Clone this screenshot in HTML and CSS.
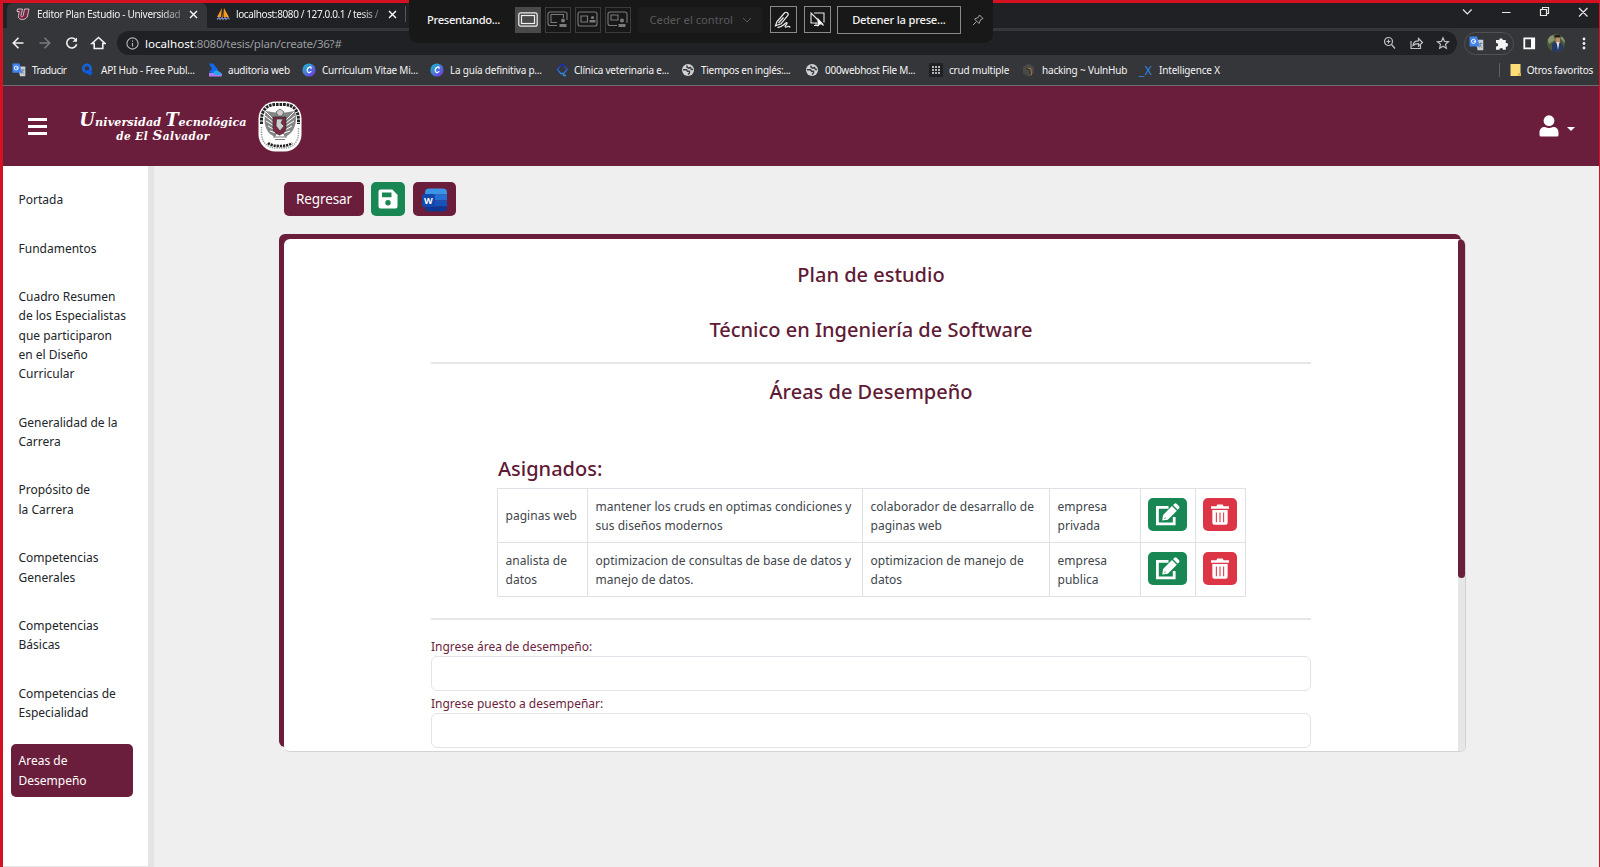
FILE: index.html
```html
<!DOCTYPE html>
<html lang="es">
<head>
<meta charset="utf-8">
<title>Editor Plan Estudio - Universidad Tecnológica</title>
<link rel="stylesheet" href="styles.css">
</head>
<body>
<svg class="defs" width="0" height="0">
  <defs>
    <linearGradient id="canva" x1="0" y1="0" x2="1" y2="1"><stop offset="0" stop-color="#14c4cc"/><stop offset="1" stop-color="#7a2be8"/></linearGradient>
    <linearGradient id="blue" x1="0" y1="0" x2="0" y2="1"><stop offset="0" stop-color="#1b27c4"/><stop offset="1" stop-color="#2f9be0"/></linearGradient>
    <symbol id="translate" viewBox="0 0 14 14"><path d="M6 3.5h7.3v9.8H8z" fill="#c9cdd4"/><path d="M.5.5h7l2.6 9.3H.5z" fill="#4284f0"/><circle cx="4.2" cy="5" r="1.9" fill="none" stroke="#fff" stroke-width=".9"/><path d="M4.3 5h2" stroke="#fff" stroke-width=".9"/><path d="M9.5 7h3M11 6v1c0 2-1 3-2 4m.8-3c.5 1.300 1.300 2 2.400 2.800" stroke="#6d7680" stroke-width=".7" fill="none"/></symbol>
    <symbol id="globe" viewBox="0 0 14 14"><circle cx="7" cy="7" r="6" fill="#d0d2d6"/><path d="M2 6.800h3.500l1 1.400h2v1.800l-1.500 1.500M6 2.500v1.700l2 1 1.500-.7 1 2H12" fill="none" stroke="#3a3b3f" stroke-width="1.400"/></symbol>
    <symbol id="canvaicon" viewBox="0 0 14 14"><circle cx="7" cy="7" r="6.600" fill="url(#canva)"/><path d="M9.200 5.200c0-2-3.200-1.600-3.900 1.300-.7 3 1.800 3.900 3.600 2.100" fill="none" stroke="#fff" stroke-width="1.300" stroke-linecap="round"/></symbol>
    <symbol id="edit" viewBox="0 0 25 23"><path d="M13.500 4.300H2.400v16.600h16.800V14" fill="none" stroke="#fff" stroke-width="2.800"/><path d="M7.200 17.500l.9-5.600L17 3l4.800 4.800-9 9z" fill="#fff"/><path d="M18 2.100L19.300.9a1.800 1.800 0 0 1 2.500 0l2.100 2.100a1.800 1.800 0 0 1 0 2.500l-1.200 1.300z" fill="#fff"/><path d="M9.500 15.300l1.200-.3" fill="none" stroke="#198754" stroke-width="1"/></symbol>
    <symbol id="trash" viewBox="0 0 20 24"><path d="M.6 3.300h5.600L7.200 1.500h5.600l1 1.800h5.600v2.800H.6z" fill="#fff"/><path d="M2 7.300h16v13.400a2 2 0 0 1-2 2H4a2 2 0 0 1-2-2z" fill="#fff"/><path d="M6.200 10v10M10 10v10M13.800 10v10" stroke="#dc3545" stroke-width="1.100"/></symbol>
  </defs>
</svg>
<div class="screen">
  <div class="tabs">
    <div class="tab active">
      <svg class="fav" width="14" height="14" viewBox="0 0 14 14"><path d="M1.500 2h5L5 8.500c-.3 1.500 1.800 1.500 2.200 0L8.500 2h4.500l-1.500 7c-1.200 5-10.500 4.500-9-.5L3.300 4.500H1z" fill="#7c2442" stroke="#e8dfe3" stroke-width=".8"/></svg>
      <span class="tabname">Editor Plan Estudio - Universidad</span>
      <svg class="x" width="9" height="9" viewBox="0 0 9 9"><path d="M1 1l7 7M8 1L1 8" stroke="#fff" stroke-width="1.400"/></svg>
    </div>
    <div class="tab">
      <svg class="fav" width="15" height="14" viewBox="0 0 15 14"><path d="M6 1L1 10h4zM8 1v9h5z" fill="#f29a1f"/><path d="M8 1l-2 9h1.500z" fill="#c9702a"/><path d="M1 12.500l2-2 1 2 2-2 1 2 2-2 1 2 2-2 1.500 2" fill="none" stroke="#8188b5" stroke-width="1.200"/></svg>
      <span class="tabname two">localhost:8080 / 127.0.0.1 / tesis /</span>
      <svg class="x" width="9" height="9" viewBox="0 0 9 9"><path d="M1 1l7 7M8 1L1 8" stroke="#fff" stroke-width="1.400"/></svg>
    </div>
    <span class="tabsep"></span>
    <svg class="winbtns" width="136" height="20" viewBox="0 0 136 20" fill="none" stroke="#e8e8e8" stroke-width="1.200"><path d="M3 6.500l4.300 4.300 4.300-4.300M42 9.500h8.500"/><path d="M80.500 6.500h6v6h-6zM82.500 6.300V4.500h6v6h-1.800M119 5l8.500 8.500m0-8.500L119 13.500"/></svg>
  </div>

  <div class="toolbar">
    <svg class="nav" width="94" height="24" viewBox="0 0 94 24" fill="none" stroke="#f1f1f1" stroke-width="1.600"><path d="M11.500 12H1.500M6.500 6.800L1.300 12l5.200 5.200"/><path d="M27.500 12h10M32.500 6.800l5.200 5.200-5.200 5.200" stroke="#77797d"/><path d="M64 9.300a5 5 0 1 0 .6 3.900"/><path d="M65 6.500v4.300h-4.500z" fill="#f1f1f1" stroke="none"/><path d="M82.200 17.500v-5h-2.200l6.500-6 6.500 6h-2.200v5z"/></svg>
    <div class="omnibox">
      <svg width="13" height="13" viewBox="0 0 13 13" fill="none" stroke="#b5b7ba" stroke-width="1.100"><circle cx="6.500" cy="6.500" r="5.600"/><path d="M6.500 6v3.500M6.500 3.500v1.200"/></svg>
      <span class="url"><b>localhost</b>:8080/tesis/plan/create/36?#</span>
      <svg class="omni-icons" width="68" height="14" viewBox="0 0 68 14" fill="none" stroke="#bfc1c4" stroke-width="1.200"><circle cx="5.500" cy="5.500" r="4"/><path d="M8.500 8.500l3.500 4M3.500 5.500h4M5.500 3.500v4M28 5v7.500h9.500V9M30 9.500c.3-3 2.500-4.700 5.500-4.700V2.500l4 4-4 3.600V7.700c-2.300 0-4 .3-5.500 1.800z"/><path d="M60 1.800l1.500 3.600 4 .3-3 2.600.9 3.900-3.400-2-3.400 2 .9-3.900-3-2.600 4-.3z"/></svg>
    </div>
    <div class="exts">
      <svg width="15" height="15"><use href="#translate"/></svg>
      <svg width="13" height="13" viewBox="0 0 13 13"><path d="M1 3h3.200a1.800 1.800 0 1 1 3.600 0h3v3.200a1.800 1.800 0 1 1 0 3.500v3H8a1.800 1.800 0 0 0-3.600 0H1V9.500a1.700 1.700 0 1 0 0-3.300z" fill="#f4f4f4"/></svg>
    </div>
    <svg width="13" height="13" viewBox="0 0 13 13"><path d="M1.300 1.300h9.900v10H1.300z" fill="none" stroke="#fff" stroke-width="1.800"/><path d="M8 1h4v11H8z" fill="#fff"/></svg>
    <svg class="avatar" width="18" height="18" viewBox="0 0 18 18"><defs><clipPath id="av"><circle cx="9" cy="9" r="9"/></clipPath></defs><g clip-path="url(#av)"><path d="M0 0h18v18H0z" fill="#4c5a3c"/><path d="M0 3l6-2 2 5-6 4zM13 4l5-2v7z" fill="#87946b"/><path d="M5 18V10l3-2 4-1 4 4v7z" fill="#253a66"/><path d="M8.500 2h4.500v6l-2 3-2.500-3z" fill="#bd8a70"/><path d="M8 1h5v2.500H8z" fill="#221b19"/><path d="M9.500 8l1.500 8 1.500-8z" fill="#dcdde6"/></g></svg>
    <svg class="dots" width="4" height="13" viewBox="0 0 4 13" fill="#f1f1f1"><circle cx="2" cy="2" r="1.400"/><circle cx="2" cy="6.500" r="1.400"/><circle cx="2" cy="11" r="1.400"/></svg>
  </div>

  <div class="bookmarks">
    <div class="bm b1"><svg width="14" height="14"><use href="#translate"/></svg><span>Traducir</span></div>
    <div class="bm b2"><svg width="14" height="14" viewBox="0 0 14 14"><circle cx="6" cy="5.500" r="3.700" fill="none" stroke="#1463d8" stroke-width="2.700"/><path d="M3 8l5-1 3.500 2-2 4z" fill="#0d5be0"/></svg><span>API Hub - Free Publ...</span></div>
    <div class="bm b3"><svg width="14" height="14" viewBox="0 0 14 14"><path d="M1 .5h4l5 6-6 4L1 9l3-3z" fill="#1268ee"/><path d="M1 10h10a2 2 0 0 1 2 3.500H1z" fill="#b07af0"/><path d="M5 9l4-2 4 3v2H7z" fill="#28a4ee"/></svg><span>auditoria web</span></div>
    <div class="bm b4"><svg width="14" height="14"><use href="#canvaicon"/></svg><span>Currículum Vitae Mi...</span></div>
    <div class="bm b5"><svg width="14" height="14"><use href="#canvaicon"/></svg><span>La guía definitiva p...</span></div>
    <div class="bm b6"><svg width="14" height="14" viewBox="0 0 14 14"><path d="M5.500 1.300L1.500 6.500l3.300 4h2.800l3.500-4-4-5.200zM6.500 10.500l1.500 2h2" fill="none" stroke="url(#blue)" stroke-width="1.300"/></svg><span>Clínica veterinaria e...</span></div>
    <div class="bm b7"><svg width="14" height="14"><use href="#globe"/></svg><span>Tiempos en inglés:...</span></div>
    <div class="bm b8"><svg width="14" height="14"><use href="#globe"/></svg><span>000webhost File M...</span></div>
    <div class="bm b9"><svg width="14" height="14" viewBox="0 0 14 14"><path d="M0 0h14v14H0z" fill="#202124"/><path d="M3 4h2m1 0h2m1 0h2M3 7h2m1 0h2m1 0h2M3 10h2m1 0h2m1 0h2" stroke="#e6e6e6" stroke-width="1.400"/></svg><span>crud multiple</span></div>
    <div class="bm b10"><svg width="14" height="14" viewBox="0 0 14 14"><path d="M6.500.5l5.500 3.500v6l-5.500 3.500L1 10V4z" fill="#4b4a4a"/><path d="M4.500 5l4-.3 1.500 2.800v4.300L8.500 13V8z" fill="#98703f"/><path d="M4 5.500l4 1.500v4" fill="none" stroke="#242427"/></svg><span>hacking ~ VulnHub</span></div>
    <div class="bm b11"><span class="ix">_X</span><span>Intelligence X</span></div>
    <div class="other"><svg width="11" height="12" viewBox="0 0 11 12"><path d="M.5 0h10v12h-10z" fill="#fbdc78"/><path d="M8 9h3v3H8z" fill="#e0b64c"/></svg><span>Otros favoritos</span></div>
  </div>

  <div class="present">
    <span class="ptext">Presentando...</span>
    <div class="modes">
      <div class="mode on"><svg width="20" height="15" viewBox="0 0 20 15" fill="none" stroke="#f0f0f0" stroke-width="1.200"><rect x=".8" y=".8" width="18.400" height="13.400" rx="2"/><rect x="3.500" y="3.500" width="13" height="8"/></svg></div>
      <div class="mode"><svg width="22" height="17" viewBox="0 0 22 17" fill="none" stroke="#7b7b7b" stroke-width="1.100"><path d="M10 14.500H3a2 2 0 0 1-2-2V3a2 2 0 0 1 2-2h15a2 2 0 0 1 2 2v6M10 11.500H4v-8h12.500V7"/><circle cx="16" cy="9.500" r="2" fill="#7b7b7b" stroke="none"/><path d="M12.500 16v-3h7v3z" fill="#7b7b7b" stroke="none"/></svg></div>
      <div class="mode"><svg width="22" height="17" viewBox="0 0 22 17" fill="none" stroke="#7b7b7b" stroke-width="1.100"><rect x="1" y="1" width="19" height="14" rx="2"/><path d="M4 5h6.500v6H4z"/><circle cx="15.500" cy="6.500" r="1.600" fill="#7b7b7b" stroke="none"/><path d="M12.500 11.500V9h6v2.500z" fill="#7b7b7b" stroke="none"/></svg></div>
      <div class="mode"><svg width="22" height="17" viewBox="0 0 22 17" fill="none" stroke="#7b7b7b" stroke-width="1.100"><path d="M10 14.500H3a2 2 0 0 1-2-2V3a2 2 0 0 1 2-2h15a2 2 0 0 1 2 2v9"/><path d="M4 4h7v5H4z"/><circle cx="15" cy="9.500" r="2" fill="#7b7b7b" stroke="none"/><path d="M11.500 16v-3h7v3z" fill="#7b7b7b" stroke="none"/></svg></div>
    </div>
    <div class="ceder"><span>Ceder el control</span><svg width="10" height="6" viewBox="0 0 10 6"><path d="M1 1l4 4 4-4" fill="none" stroke="#5a5a5a"/></svg></div>
    <div class="sq"><svg width="18" height="18" viewBox="0 0 18 18" fill="none" stroke="#f0f0f0" stroke-width="1.200"><path d="M1.500 14.800L3 10.500 10.500 2c1.700-1.800 4.700.3 3.300 2.400L7 12.800zM4.500 12l5-5.500M3.500 16.300c3.500.8 6.500-3.300 8.700-4.500 1.200-.5 1.200 1-.2 2.200-1.600 1.600-.8 2.500 1 1.800 1.700-.7 2.500-.5 3.200.7"/></svg></div>
    <div class="sq"><svg width="17" height="17" viewBox="0 0 17 17" fill="none" stroke="#e8e8e8" stroke-width="1.100"><path d="M5 2h10v9.500M2 3v9h6M5 14.500h5M7 12v2.500M1.500 1.500l13 13"/><path d="M9 8v6.500l1.700-1.500 2.800-.1z" fill="#fff"/></svg></div>
    <div class="stop">Detener la prese...</div>
    <svg class="pin" width="12" height="12" viewBox="0 0 12 12" fill="none" stroke="#a5a5a5"><path d="M7.500 1l3.500 3.500-2.500 1.200L7 9.500 2.500 5l3.800-1.500zM4.500 7.500L1 11"/></svg>
  </div>

  <header class="header">
    <svg class="menu" width="19" height="17" viewBox="0 0 19 17"><path d="M0 1.500h19M0 8.500h19M0 15.500h19" stroke="#fff" stroke-width="2.900"/></svg>
    <div class="brand"><div class="l1"><i>U</i>niversidad <i>T</i>ecnológica</div><div class="l2">de El <i>S</i>alvador</div></div>
    <svg class="seal" width="44" height="51" viewBox="0 0 44 51">
      <rect x=".5" y=".5" width="43" height="50" rx="17" fill="#fff"/>
      <path d="M3.500 23V19C3.500 9 9 3.500 18 3.500h8c9 0 14.500 5.500 14.500 15.500v4" fill="none" stroke="#222" stroke-width="3" stroke-dasharray="2.600 .9"/>
      <path d="M3.500 26v6c0 9 5.500 15 14.500 15h8c9 0 14.500-6 14.500-15v-6" fill="none" stroke="#999" stroke-width="1.500" stroke-dasharray="1.300 1"/>
      <path d="M10 42c4 4 20 4 24 0" fill="none" stroke="#222" stroke-width="2.600" stroke-dasharray="2.200 .9"/>
      <path d="M20 12L8 10c-3 9-1 18 4 23l5 3 4-7h2l4 7c9-4 13-14 10-26l-13 2z" fill="#858585"/>
      <path d="M8 11l8 8M7 15l9 7M8 20l8 5M10 25l7 4M12 30l6 2M36 11l-8 8M37 15l-9 7M36 20l-8 5M34 25l-7 4M32 30l-6 2" stroke="#fff" stroke-width="1"/>
      <path d="M15 16h13v11c0 5-6.500 7-6.500 7S15 32 15 27z" fill="#7d2944" stroke="#333" stroke-width=".8"/>
      <path d="M18.500 18H25l-2 4 3 3-4 5-4-5z" fill="#ccc" stroke="#333" stroke-width=".7"/>
      <path d="M18 11l4-3 4 3-2 4h-4zM15 36h14M17 38.500h10" stroke="#555" fill="#ccc" stroke-width=".8"/>
    </svg>
    <svg class="user" width="20" height="22" viewBox="0 0 20 22" fill="#fff"><circle cx="10" cy="5.700" r="5.400"/><path d="M.5 20v-2.500c0-3.500 2.200-5.500 5.500-5.500 2.500 1.200 5.500 1.200 8 0 3.300 0 5.500 2 5.500 5.500V20a1.500 1.500 0 0 1-1.500 1.500H2A1.500 1.500 0 0 1 .5 20z"/></svg>
    <svg class="caret" width="8" height="4" viewBox="0 0 8 4"><path d="M0 0h8L4 4z" fill="#fff"/></svg>
  </header>

  <div class="body">
    <nav class="side">
      <a>Portada</a>
      <a>Fundamentos</a>
      <a>Cuadro Resumen<br>de los Especialistas<br>que participaron<br>en el Diseño<br>Curricular</a>
      <a>Generalidad de la<br>Carrera</a>
      <a>Propósito de<br>la Carrera</a>
      <a>Competencias<br>Generales</a>
      <a>Competencias<br>Básicas</a>
      <a>Competencias de<br>Especialidad</a>
      <a class="current">Areas de<br>Desempeño</a>
    </nav>
    <main class="main">
      <div class="actions">
        <div class="btn back">Regresar</div>
        <div class="btn save"><svg width="20" height="20" viewBox="0 0 20 20"><path fill-rule="evenodd" d="M2.500.5h11.800l5.200 5.200v11.800a2 2 0 0 1-2 2h-15a2 2 0 0 1-2-2v-15a2 2 0 0 1 2-2zM4 3.500v4.800h9.500V3.500z" fill="#fff"/><circle cx="10" cy="13.700" r="2.700" fill="#198754"/></svg></div>
        <div class="btn word"><svg width="26" height="24" viewBox="0 0 26 24"><defs><clipPath id="wd"><rect x="3" y=".5" width="22" height="23" rx="4"/></clipPath></defs><g clip-path="url(#wd)"><path d="M0 0h26v6.500H0z" fill="#3a94e8"/><path d="M0 6.500h26v6H0z" fill="#2470d4"/><path d="M0 12.500h26v6H0z" fill="#1552bc"/><path d="M0 18.500h26V24H0z" fill="#0d3792"/></g><rect x="0" y="6" width="13" height="13" rx="1.500" fill="#1349ae"/><text x="6.400" y="15.500" text-anchor="middle" class="w">W</text></svg></div>
      </div>
      <section class="panel">
        <div class="content">
          <h1>Plan de estudio</h1>
          <h1 class="career">Técnico en Ingeniería de Software</h1>
          <div class="rule"></div>
          <h1 class="areas">Áreas de Desempeño</h1>
          <h2>Asignados:</h2>
          <table>
            <colgroup><col class="c1"><col class="c2"><col class="c3"><col class="c4"><col class="c5"><col class="c6"></colgroup>
            <tr><td>paginas web</td><td>mantener los cruds en optimas condiciones y<br>sus diseños modernos</td><td>colaborador de desarrallo de<br>paginas web</td><td>empresa<br>privada</td><td><div class="act edit"><svg width="25" height="23"><use href="#edit"/></svg></div></td><td><div class="act del"><svg width="20" height="23"><use href="#trash"/></svg></div></td></tr>
            <tr><td>analista de<br>datos</td><td>optimizacion de consultas de base de datos y<br>manejo de datos.</td><td>optimizacion de manejo de<br>datos</td><td>empresa<br>publica</td><td><div class="act edit"><svg width="25" height="23"><use href="#edit"/></svg></div></td><td><div class="act del"><svg width="20" height="23"><use href="#trash"/></svg></div></td></tr>
          </table>
          <div class="rule second"></div>
          <label>Ingrese área de desempeño:</label>
          <div class="input"></div>
          <label>Ingrese puesto a desempeñar:</label>
          <div class="input"></div>
        </div>
        <div class="scroll"><div class="thumb"></div></div>
      </section>
    </main>
  </div>
</div>
</body>
</html>
```
FILE: styles.css
```css
* { box-sizing: border-box; }
body { margin: 0; font-family: "Noto Sans", "Open Sans", sans-serif; overflow: hidden; }
svg { display: block; flex: none; }
.defs { position: absolute; }
.screen { position: relative; width: 1600px; height: 867px; border: solid #d41224; border-width: 3px 1px 0 3px; display: flex; flex-direction: column; background: #efefef; white-space: nowrap; }

.tabs { height: 25px; flex: none; background: #202124; display: flex; padding-left: 4px; color: #f1f1f1; }
.tab { display: flex; align-items: center; width: 198px; height: 25px; padding: 0 0 3px 9px; }
.tab.active { width: 200px; background: #35363a; border-radius: 6px 6px 0 0; }
.tabname { width: 147px; margin-left: 7px; font-size: 10px; line-height: 20px; letter-spacing: -.3px; -webkit-mask-image: linear-gradient(90deg, #000 84%, rgba(0,0,0,.25)); mask-image: linear-gradient(90deg, #000 84%, rgba(0,0,0,.25)); }
.tab .x { margin-left: 5px; }
.tab .two { margin-left: 5px; letter-spacing: -.38px; }
.tab .two + .x { margin-left: 5px; }
.tabsep { width: 1px; height: 16px; margin-top: 3px; background: #56575b; }
.winbtns { margin-left: auto; margin-right: 3px; }

.toolbar { height: 30px; flex: none; background: #35363a; display: flex; align-items: center; padding-left: 9px; padding-right: 13px; }
.omnibox { display: flex; align-items: center; width: 1340px; height: 24px; margin-left: 11px; padding: 0 6px 0 9px; border-radius: 12px; background: #202124; }
.url { margin-left: 6px; font-size: 11.6px; color: #9a9ca0; letter-spacing: -.27px; }
.url b { font-weight: 400; color: #fff; letter-spacing: 0; }
.omni-icons { margin-left: auto; }
.exts { display: flex; align-items: center; justify-content: space-between; width: 50px; height: 23px; margin: 0 9px 0 7px; padding: 0 5px 0 4px; border: 1px solid #505155; border-radius: 12px; }
.avatar { margin-left: 11px; }
.dots { margin-left: auto; }

.bookmarks { height: 28px; flex: none; background: #35363a; border-bottom: 1px solid #6b6c70; display: flex; align-items: center; padding: 0 0 3px 9px; color: #f4f4f4; font-size: 10px; letter-spacing: -.22px; }
.bm { display: flex; align-items: center; gap: 6px; flex: none; }
.b1 { width: 69px; letter-spacing: -.5px; } .b2 { width: 127px; } .b3 { width: 94px; } .b4 { width: 128px; } .b5 { width: 126px; } .b6 { width: 125px; gap: 4px; } .b7 { width: 124px; letter-spacing: -.3px; } .b8 { width: 124px; letter-spacing: -.28px; } .b9 { width: 93px; } .b10 { width: 117px; } .b11 { width: 100px; letter-spacing: -.18px; }
.b9, .b10 { letter-spacing: -.18px; }
.ix { width: 14px; color: #2f86e6; font-size: 12px; letter-spacing: .4px; }
.other { display: flex; align-items: center; gap: 6px; margin-left: auto; margin-right: 6px; padding-left: 10px; height: 14px; border-left: 1px solid #606165; letter-spacing: -.26px; }

.present { position: absolute; left: 406px; top: -3px; width: 584px; height: 43px; background: #181818; border-radius: 0 0 9px 9px; display: flex; align-items: center; padding: 0 9px 4px 18px; color: #f4f4f4; font-size: 11.2px; }
.ptext { width: 88px; letter-spacing: -.3px; font-weight: 500; }
.modes { display: flex; gap: 4px; }
.mode { width: 26px; height: 26px; border: 1px solid #3c3c3c; display: flex; align-items: center; justify-content: center; }
.mode.on { background: #4a4a4a; border-color: #4a4a4a; }
.ceder { width: 125px; height: 26px; margin-left: 7px; padding: 0 10px 0 12px; background: #1d1d1d; color: #5a5a5a; font-size: 11.2px; display: flex; align-items: center; justify-content: space-between; }
.sq { width: 27px; height: 27px; margin-left: 7px; border: 1px solid #8a8a8a; display: flex; align-items: center; justify-content: center; }
.ceder + .sq { margin-left: 8px; }
.stop { width: 125px; height: 28px; margin-left: 6px; border: 1px solid #8a8a8a; text-align: center; line-height: 25px; font-weight: 500; letter-spacing: -.22px; }
.pin { margin-left: 11px; }

.header { height: 80px; flex: none; background: #6b1e3b; display: flex; align-items: center; padding: 0 24px 0 25px; }
.brand { width: 172px; margin: 4px 0 0 30px; color: #fff; font-family: "DejaVu Serif", serif; font-weight: 700; font-style: italic; font-size: 11.2px; line-height: 13px; text-align: center; letter-spacing: .07px; }
.l1 { line-height: 14px; }
.l2 { font-size: 10.5px; letter-spacing: .5px; }
.brand i { font-size: 18px; line-height: 12px; }
.brand .l2 i { font-size: 13.5px; }
.seal { margin-left: 9px; }
.user { margin-left: auto; }
.caret { margin-left: 8px; margin-top: 5px; }

.body { flex: 1; min-height: 0; display: flex; }
.side { width: 151px; border-right: 6px solid #e4e4e4; border-bottom: 1px solid #e4e4e4; background: #fff; padding: 17px 15px 0 8px; display: flex; flex-direction: column; gap: 14.600px; color: #212529; font-size: 12px; line-height: 19.38px; }
.side a { padding: 7.2px 7.500px; border-radius: 5px; }
.side .current { background: #6b1e3b; color: #fff; }

.main { flex: 1; padding: 16px 0 0 130px; }
.actions { display: flex; }
.btn { height: 34px; border-radius: 5px; background: #6b1e3b; color: #fff; display: flex; align-items: center; justify-content: center; font-size: 13.5px; }
.back { width: 80px; padding-bottom: 1px; letter-spacing: -.1px; }
.save { width: 34px; margin: 0 8px 0 7px; background: #198754; }
.word { width: 43px; padding-top: 2px; }
.w { font: 700 9px "Noto Sans", sans-serif; fill: #fff; }

.panel { width: 1182px; height: 513px; margin-top: 23px; display: flex; overflow: hidden; background: #fff; border: solid #d3d3d3; border-width: 0 1px 1px 0; border-radius: 6px; box-shadow: -5px -5px 0 0 #6b1e3b; }
.content { width: 1174px; padding: 0 147px; }
.scroll { width: 7px; background: #e6e6e6; }
.thumb { height: 339px; background: #6b1e3b; border-radius: 4px; }
h1, h2 { margin: 0; font-weight: 500; font-size: 20px; line-height: 30px; color: #5f1b36; }
h1 { text-align: center; margin-top: 21px; }
.career { margin-top: 25px; }
.rule { height: 2px; margin-top: 17px; background: #e6e6e6; }
.areas { margin-top: 13px; }
h2 { margin: 47px 0 0 67px; }
table { width: 748px; margin: 4px 0 0 66px; border-collapse: collapse; table-layout: fixed; color: #40464b; font-size: 12px; line-height: 19.35px; letter-spacing: .03px; }
tr { height: 54px; }
td { border: 1px solid #dee2e6; padding: 1px 7.500px 0; vertical-align: middle; }
.c1 { width: 90px; } .c2 { width: 275px; } .c3 { width: 187px; } .c4 { width: 91px; } .c5 { width: 55px; } .c6 { width: 50px; }
.act { height: 33px; border-radius: 5px; display: flex; align-items: center; justify-content: center; margin: -3px 0 0 -1px; }
.edit { width: 39px; background: #198754; }
.del { width: 34px; background: #dc3545; }
.second { margin-top: 21px; }
label { display: block; height: 19px; font-size: 12px; line-height: 19px; color: #6b1e3b; }
.second + label { margin-top: 17px; }
.input { height: 35px; margin-bottom: 3px; border: 1px solid #e0e3e7; border-radius: 6px; }
```
